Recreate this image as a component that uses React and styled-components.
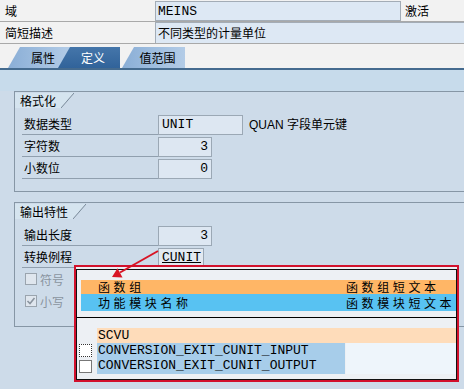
import React from "react";
import styled, { createGlobalStyle } from "styled-components";

const CJK = `"Noto Sans CJK SC", "Liberation Sans", sans-serif`;
const MONO = `"Liberation Mono", "Noto Sans CJK SC", monospace`;

const Global = createGlobalStyle`
  html, body { margin: 0; padding: 0; background: #f2f2f2; }
  body { font-family: ${CJK}; font-size: 12px; color: #000; }
  * { box-sizing: border-box; }
`;

const Screen = styled.div`
  position: relative;
  width: 464px;
  height: 389px;
  overflow: hidden;
  background: #f2f2f2;
  display: flex;
  flex-direction: column;
`;

const TopRow = styled.div`
  display: flex;
  height: 22px;
  flex: none;
  border-bottom: 1px solid #a9a9a9;
`;

const TopLabel = styled.div`
  width: 155px;
  flex: none;
  padding-left: 5px;
  line-height: 21px;
`;

const TopField = styled.div`
  flex: ${(p) => (p.$w ? "none" : "1")};
  width: ${(p) => (p.$w ? `${p.$w}px` : "auto")};
  height: ${(p) => (p.$boxed ? "20px" : "21px")};
  margin-top: ${(p) => (p.$boxed ? "1px" : "0")};
  background: #dde8f4;
  border: 1px solid #a3acb6;
  border-right: ${(p) => (p.$boxed ? "1px solid #a3acb6" : "none")};
  border-bottom: ${(p) => (p.$boxed ? "1px solid #a3acb6" : "none")};
  padding-left: 2px;
  font-family: ${(p) => (p.$mono ? MONO : CJK)};
  font-size: ${(p) => (p.$mono ? "13px" : "12px")};
  line-height: 19px;
  white-space: nowrap;
`;

const TopNote = styled.div`
  margin-left: 4px;
  line-height: 21px;
`;

const TabStrip = styled.div`
  display: flex;
  flex: none;
  height: 26px;
  padding: 3px 0 0 8px;
  border-bottom: 2px solid #456b8f;
`;

const Tab = styled.div`
  position: relative;
  z-index: ${(p) => (p.$active ? 2 : 1)};
  width: ${(p) => p.$w}px;
  margin-left: ${(p) => p.$ml || 0}px;
  height: 21px;
  padding: 0 4px 0 12px;
  display: flex;
  align-items: center;
  justify-content: center;
  clip-path: polygon(12px 0, 100% 0, 100% 100%, 0 100%);
  background: ${(p) =>
    p.$active
      ? "linear-gradient(#4576aa, #31639a)"
      : "linear-gradient(to right, #8aaed6, #b3cce7)"};
  color: ${(p) => (p.$active ? "#fff" : "#000")};
  font-size: 12px;
  line-height: 21px;
`;

const Panel = styled.div`
  flex: 1;
  background: linear-gradient(#c7dbeb 0, #c7dbeb 21px, #cddbe9 21px);
  padding: 21px 0 0 14px;
`;

const Group = styled.section`
  margin-right: -20px;
  margin-top: ${(p) => p.$mt || 0}px;
  border: 1px solid #8696a5;
  border-right: none;
  background: #cddbe9;
`;

const GroupTitle = styled.div`
  display: inline-block;
  height: 15px;
  padding: 0 18px 0 5px;
  line-height: 15px;
  font-size: 12px;
  background:
    linear-gradient(to top left, transparent calc(50% - 0.8px), #7b8b9b 50%, transparent calc(50% + 0.8px)) right / 13px 100% no-repeat,
    linear-gradient(to top left, transparent 50%, #d5e4ef 50%) right / 13px 100% no-repeat,
    linear-gradient(#d5e4ef, #d5e4ef) left / calc(100% - 13px) 100% no-repeat;
`;

const GroupBody = styled.div`
  padding: 4px 0 ${(p) => p.$pb}px 7px;
`;

const FieldRow = styled.div`
  display: flex;
  align-items: flex-end;
  height: 22px;
`;

const FieldLabel = styled.div`
  width: 136px;
  flex: none;
  height: 21px;
  padding-left: 2px;
  line-height: 20px;
  border-bottom: 1px solid #909fae;
`;

const Input = styled.div`
  width: ${(p) => p.$w}px;
  flex: none;
  height: 20px;
  border: 1px solid #9ba8b5;
  background: ${(p) => (p.$link ? "#e2e9f1" : "#dde7f2")};
  padding: 0 3px;
  font-family: ${MONO};
  font-size: 13px;
  line-height: 18px;
  text-align: ${(p) => p.$align || "left"};
  text-decoration: ${(p) => (p.$link ? "underline" : "none")};
  white-space: nowrap;
`;

const Hint = styled.div`
  margin-left: 6px;
  line-height: 20px;
  font-family: "Liberation Sans", "Noto Sans CJK SC", sans-serif;
  font-size: 12px;
`;

const CheckRow = styled.div`
  display: flex;
  align-items: center;
  gap: 3px;
  height: 22px;
  padding-left: 3px;
  color: #8a949f;
`;

const CheckBox = styled.span`
  width: 12px;
  height: 12px;
  flex: none;
  border: 1px solid #9aa4ae;
  background: #dfe6ee;
  display: flex;
  align-items: center;
  justify-content: center;
`;

const Popup = styled.div`
  position: absolute;
  left: 74px;
  top: 265px;
  width: 385px;
  height: 117px;
  border: 2px solid #d2102c;
  background: #eceff3;
  z-index: 4;
`;

const ListFrame = styled.div`
  margin-top: 2px;
  height: calc(100% - 2px);
  border: 1px solid #111;
  padding-top: 10px;
  background: #edf0f4;
`;

const HeaderBlock = styled.div`
  padding-left: 4px;
`;

const HeaderRow = styled.div`
  display: grid;
  grid-template-columns: 265px 1fr;
  height: ${(p) => p.$h}px;
  background: ${(p) => p.$bg};
  font-family: "Noto Sans CJK SC", sans-serif;
  font-size: 12px;
  letter-spacing: 3.6px;
  line-height: ${(p) => p.$h}px;
  white-space: nowrap;
`;

const HeaderCell = styled.div`
  padding-left: ${(p) => p.$pl || 0}px;
`;

const Divider = styled.div`
  margin-top: 6px;
  border-top: 1px solid #000;
`;

const DataBlock = styled.div`
  padding-top: 10px;
`;

const DataRow = styled.div`
  display: grid;
  grid-template-columns: 20px 248px 1fr;
  height: ${(p) => p.$h}px;
  font-family: ${MONO};
  font-size: 13px;
  line-height: ${(p) => p.$h}px;
`;

const DataCell = styled.div`
  grid-column: ${(p) => p.$span || "auto"};
  background: ${(p) => p.$bg};
  padding-left: 1px;
  margin-left: ${(p) => p.$ml || 0}px;
  white-space: nowrap;
  overflow: hidden;
`;

const RowBox = styled.span`
  align-self: center;
  margin-left: 2px;
  width: 13px;
  height: 13px;
  background: #fff;
  border: 1px ${(p) => (p.$focus ? "dotted #333" : "solid #777")};
`;

const Arrow = styled.svg`
  position: absolute;
  left: 0;
  top: 0;
  z-index: 5;
  pointer-events: none;
`;

export default function App() {
  return (
    <Screen>
      <Global />
      <TopRow>
        <TopLabel>域</TopLabel>
        <TopField $w={246} $boxed $mono>MEINS</TopField>
        <TopNote>激活</TopNote>
      </TopRow>
      <TopRow>
        <TopLabel>简短描述</TopLabel>
        <TopField>不同类型的计量单位</TopField>
      </TopRow>

      <TabStrip>
        <Tab $w={62}>属性</Tab>
        <Tab $w={62} $ml={-12} $active>定义</Tab>
        <Tab $w={63} $ml={2}>值范围</Tab>
      </TabStrip>

      <Panel>
        <Group>
          <GroupTitle>格式化</GroupTitle>
          <GroupBody $pb={12}>
            <FieldRow>
              <FieldLabel>数据类型</FieldLabel>
              <Input $w={85}>UNIT</Input>
              <Hint>QUAN 字段单元键</Hint>
            </FieldRow>
            <FieldRow>
              <FieldLabel>字符数</FieldLabel>
              <Input $w={54} $align="right">3</Input>
            </FieldRow>
            <FieldRow>
              <FieldLabel>小数位</FieldLabel>
              <Input $w={54} $align="right">0</Input>
            </FieldRow>
          </GroupBody>
        </Group>

        <Group $mt={10}>
          <GroupTitle>输出特性</GroupTitle>
          <GroupBody $pb={14}>
            <FieldRow>
              <FieldLabel>输出长度</FieldLabel>
              <Input $w={54} $align="right">3</Input>
            </FieldRow>
            <FieldRow>
              <FieldLabel>转换例程</FieldLabel>
              <Input $w={46} $link>CUNIT</Input>
            </FieldRow>
            <CheckRow>
              <CheckBox />
              <span>符号</span>
            </CheckRow>
            <CheckRow>
              <CheckBox>
                <svg width="10" height="10" viewBox="0 0 10 10">
                  <polyline points="1.5,5 4,7.5 8.5,2" fill="none" stroke="#8a949f" strokeWidth="1.6" />
                </svg>
              </CheckBox>
              <span>小写</span>
            </CheckRow>
          </GroupBody>
        </Group>
      </Panel>

      <Popup>
        <ListFrame>
          <HeaderBlock>
            <HeaderRow $h={14} $bg="#ffb666">
              <HeaderCell $pl={17}>函数组</HeaderCell>
              <HeaderCell>函数组短文本</HeaderCell>
            </HeaderRow>
            <HeaderRow $h={17} $bg="#58c2f2">
              <HeaderCell $pl={17}>功能模块名称</HeaderCell>
              <HeaderCell>函数模块短文本</HeaderCell>
            </HeaderRow>
          </HeaderBlock>
          <Divider />
          <DataBlock>
            <DataRow $h={15}>
              <span />
              <DataCell $span="2 / 4" $bg="#fedcba">SCVU</DataCell>
            </DataRow>
            <DataRow $h={15}>
              <RowBox $focus />
              <DataCell $bg="#a7cdea">CONVERSION_EXIT_CUNIT_INPUT</DataCell>
              <DataCell $bg="#eef5fb" $ml={1} />
            </DataRow>
            <DataRow $h={16}>
              <RowBox />
              <DataCell $bg="#a7cdea">CONVERSION_EXIT_CUNIT_OUTPUT</DataCell>
              <DataCell $bg="#eef5fb" $ml={1} />
            </DataRow>
          </DataBlock>
        </ListFrame>
      </Popup>

      <Arrow width="464" height="389" viewBox="0 0 464 389">
        <line x1="158" y1="251" x2="120" y2="272.5" stroke="#d81424" strokeWidth="2" />
        <polygon points="112,277 122.5,277.5 117.5,268.2" fill="#d81424" />
      </Arrow>
    </Screen>
  );
}
